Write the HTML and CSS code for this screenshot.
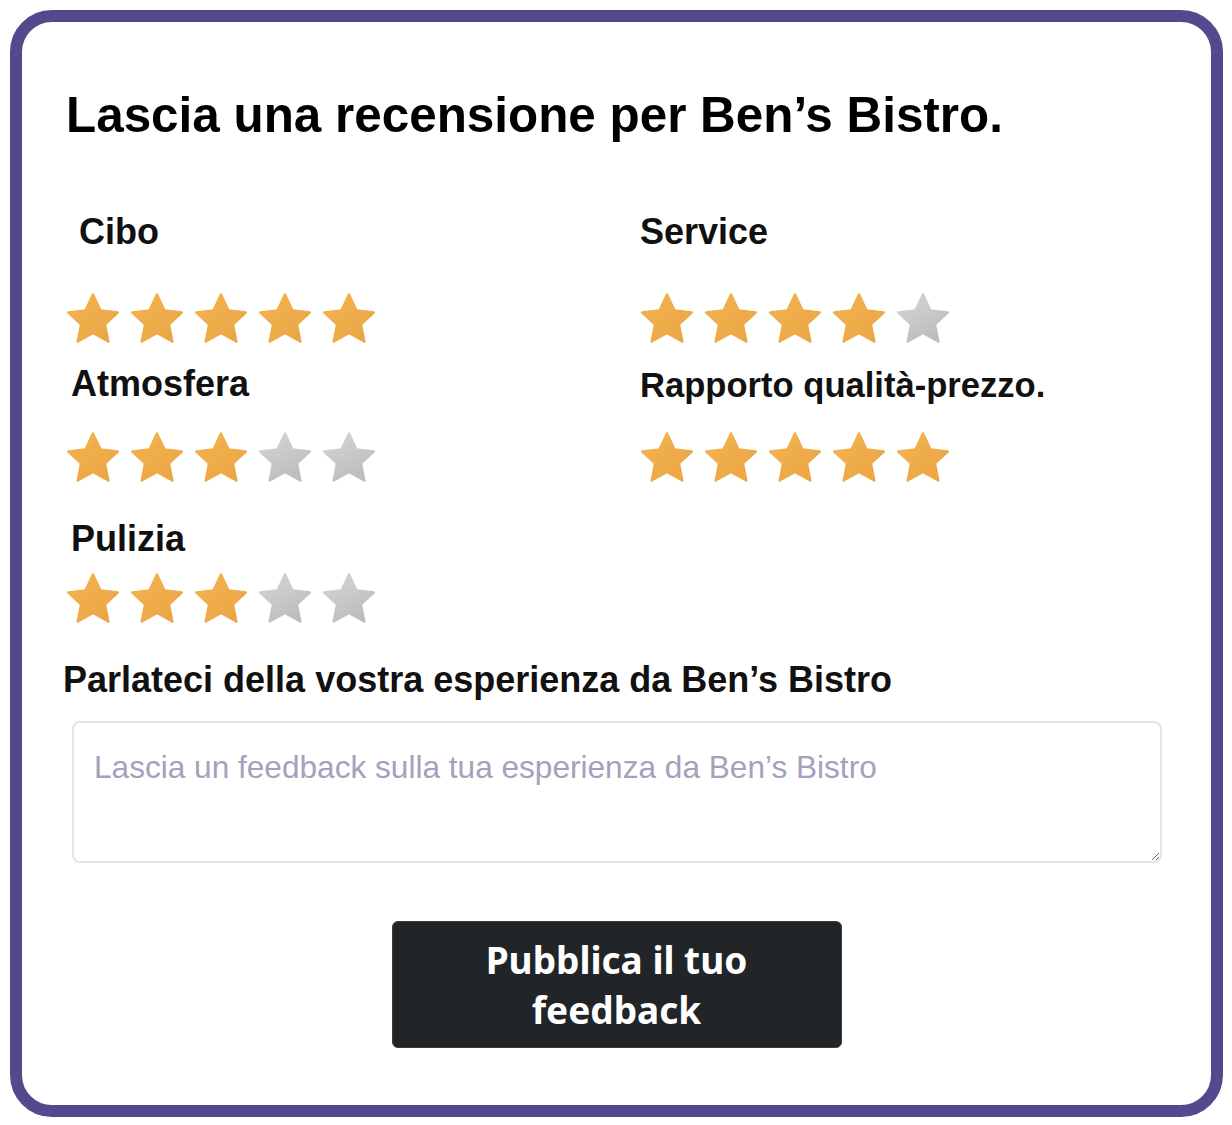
FILE: index.html
```html
<!DOCTYPE html>
<html lang="it">
<head>
    <meta charset="UTF-8">
    <meta name="viewport" content="width=device-width, initial-scale=1.0">
    <title>Recensione - Ben's Bistro</title>
    <link rel="stylesheet" href="styles.css">
</head>
<body>
    <svg class="defs" width="0" height="0" aria-hidden="true">
        <defs>
            <linearGradient id="gold" x1="0" y1="0" x2="1" y2="1">
                <stop offset="0" stop-color="#f3b352"/>
                <stop offset="1" stop-color="#eba443"/>
            </linearGradient>
            <linearGradient id="grey" x1="0" y1="0" x2="0.6" y2="1">
                <stop offset="0" stop-color="#d6d6d6"/>
                <stop offset="1" stop-color="#bdbdbd"/>
            </linearGradient>
            <symbol id="star" viewBox="0 0 54 51">
                <polygon points="27,1.5 34.35,17.39 51.73,19.47 38.89,31.36 42.28,48.53 27,40 11.72,48.53 15.11,31.36 2.27,19.47 19.65,17.39" stroke-width="2.5" stroke-linejoin="round"/>
            </symbol>
        </defs>
    </svg>

    <div class="card">
        <h1>Lascia una recensione per Ben’s Bistro.</h1>

        <div class="ratings">
            <div class="rating top">
                <div class="rating-label food">Cibo</div>
                <div class="stars">
                    <svg class="star on"><use href="#star"/></svg>
                    <svg class="star on"><use href="#star"/></svg>
                    <svg class="star on"><use href="#star"/></svg>
                    <svg class="star on"><use href="#star"/></svg>
                    <svg class="star on"><use href="#star"/></svg>
                </div>
            </div>
            <div class="rating top">
                <div class="rating-label service">Service</div>
                <div class="stars">
                    <svg class="star on"><use href="#star"/></svg>
                    <svg class="star on"><use href="#star"/></svg>
                    <svg class="star on"><use href="#star"/></svg>
                    <svg class="star on"><use href="#star"/></svg>
                    <svg class="star off"><use href="#star"/></svg>
                </div>
            </div>
            <div class="rating mid">
                <div class="rating-label">Atmosfera</div>
                <div class="stars">
                    <svg class="star on"><use href="#star"/></svg>
                    <svg class="star on"><use href="#star"/></svg>
                    <svg class="star on"><use href="#star"/></svg>
                    <svg class="star off"><use href="#star"/></svg>
                    <svg class="star off"><use href="#star"/></svg>
                </div>
            </div>
            <div class="rating mid">
                <div class="rating-label value">Rapporto qualità-prezzo.</div>
                <div class="stars">
                    <svg class="star on"><use href="#star"/></svg>
                    <svg class="star on"><use href="#star"/></svg>
                    <svg class="star on"><use href="#star"/></svg>
                    <svg class="star on"><use href="#star"/></svg>
                    <svg class="star on"><use href="#star"/></svg>
                </div>
            </div>
            <div class="rating low">
                <div class="rating-label">Pulizia</div>
                <div class="stars">
                    <svg class="star on"><use href="#star"/></svg>
                    <svg class="star on"><use href="#star"/></svg>
                    <svg class="star on"><use href="#star"/></svg>
                    <svg class="star off"><use href="#star"/></svg>
                    <svg class="star off"><use href="#star"/></svg>
                </div>
            </div>
        </div>

        <label class="prompt" for="feedback">Parlateci della vostra esperienza da Ben’s Bistro</label>
        <textarea id="feedback" class="feedback" placeholder="Lascia un feedback sulla tua esperienza da Ben’s Bistro"></textarea>

        <div class="actions">
            <button class="submit" type="button">Pubblica il tuo feedback</button>
        </div>
    </div>
</body>
</html>
```

FILE: styles.css
```css
body {
    margin: 0;
    font-family: "Liberation Sans", Arial, sans-serif;
    background-color: #fff;
    color: #000;
}
.defs {
    position: absolute;
    width: 0;
    height: 0;
    overflow: hidden;
}
.card {
    box-sizing: border-box;
    width: 1213px;
    height: 1107px;
    margin: 10px;
    padding: 0 44px;
    border: 12px solid #524a8c;
    border-radius: 42px;
    background: #fff;
}
h1 {
    margin: 65px 0 0 0;
    font-size: 49.4px;
    line-height: 56px;
    font-weight: bold;
}
.ratings {
    display: grid;
    grid-template-columns: 574px 1fr;
    margin-top: 69px;
}
.rating-label {
    font-size: 36px;
    line-height: 40px;
    font-weight: bold;
    color: #111;
    padding-left: 5px;
}
.rating-label.food {
    padding-left: 13px;
}
.rating-label.service {
    padding-left: 0;
}
.rating-label.value {
    padding-left: 0;
    font-size: 34.6px;
    line-height: 42px;
}
.stars {
    display: flex;
    gap: 10px;
}
.star {
    width: 54px;
    height: 51px;
}
.star.on {
    fill: url(#gold);
    stroke: url(#gold);
}
.star.off {
    fill: url(#grey);
    stroke: url(#grey);
}
.rating.top .stars {
    margin-top: 41px;
}
.rating.mid {
    margin-top: 20px;
}
.rating.mid .stars {
    margin-top: 28px;
}
.rating.mid .value + .stars {
    margin-top: 26px;
}
.rating.low {
    margin-top: 36px;
}
.rating.low .stars {
    margin-top: 14px;
}
.prompt {
    display: block;
    margin: 34px 0 0 -3px;
    font-size: 36px;
    line-height: 44px;
    font-weight: bold;
    color: #111;
}
.feedback {
    display: block;
    box-sizing: border-box;
    width: 1090px;
    height: 142px;
    margin: 19px 0 0 6px;
    padding: 26px 20px;
    border: 2px solid #e4e4e6;
    border-radius: 8px;
    font-family: "Liberation Sans", Arial, sans-serif;
    font-size: 31.6px;
    line-height: 36px;
    color: #333;
}
.feedback::placeholder {
    color: #a4a1bd;
}
.actions {
    display: flex;
    justify-content: center;
    margin-top: 58px;
}
.submit {
    box-sizing: border-box;
    width: 450px;
    height: 127px;
    padding: 0 60px;
    border: 1px solid #3a3d40;
    border-radius: 6px;
    background-color: #222528;
    color: #fff;
    font-family: "Noto Sans", "Open Sans", sans-serif;
    font-size: 37px;
    line-height: 50px;
    font-weight: bold;
}
```
